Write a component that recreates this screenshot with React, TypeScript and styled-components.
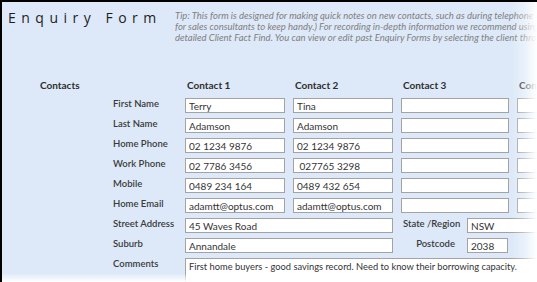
import * as React from "react";
import styled, { createGlobalStyle } from "styled-components";

const GlobalStyle = createGlobalStyle`
  body {
    margin: 0;
    background: #ffffff;
  }
`;

const Frame = styled.div`
  position: relative;
  width: 537px;
  height: 282px;
  box-sizing: border-box;
  overflow: hidden;
  background: #dde9f8;
  border-top: 2px solid #000;
  border-left: 2px solid #000;
  font-family: Lato, "Open Sans", sans-serif;
  color: #333;
`;

const Header = styled.div`
  display: flex;
  align-items: flex-start;
  padding: 7px 0 0 6px;
  height: 69px;
  box-sizing: border-box;
`;

const Title = styled.div`
  width: 167px;
  flex: none;
  font-family: "Open Sans", sans-serif;
  font-size: 14px;
  line-height: 18px;
  letter-spacing: 5.5px;
  color: #1e1e1e;
  white-space: nowrap;
`;

const Tip = styled.div`
  flex: 1;
  min-width: 0;
  overflow: hidden;
  padding-top: 1px;
  font-size: 9.5px;
  font-style: italic;
  line-height: 11px;
  color: #808080;
`;

const TipLine = styled.div`
  white-space: nowrap;
`;

const FormGrid = styled.div`
  display: grid;
  grid-template-columns: 65px 64px 100px 100px 108px 100px;
  grid-auto-rows: 15px;
  column-gap: 8px;
  row-gap: 5px;
  padding: 7px 0 0 38px;
  width: max-content;
`;

const SectionLabel = styled.div`
  grid-column: 1;
  font-size: 10px;
  font-weight: 700;
  line-height: 15px;
  color: #2e2e2e;
`;

const ColHead = styled.div`
  font-size: 10px;
  font-weight: 700;
  line-height: 15px;
  padding-left: 2px;
  color: #2e2e2e;
  white-space: nowrap;
`;

const FieldLabel = styled.div<{ $right?: boolean }>`
  font-size: 9.5px;
  font-weight: 600;
  line-height: 12px;
  color: #3a3a3a;
  white-space: nowrap;
  text-align: ${(p) => (p.$right ? "right" : "left")};
`;

const RowLabel = styled(FieldLabel)`
  grid-column: 2;
`;

const Field = styled.input<{ $span?: number; $width?: number }>`
  grid-column: ${(p) => (p.$span ? `span ${p.$span}` : "auto")};
  width: ${(p) => (p.$width ? `${p.$width}px` : "100%")};
  height: 15px;
  box-sizing: border-box;
  margin: 0;
  padding: 0 3px;
  border: 1px solid #a3a3a3;
  background: #fff;
  font-family: Lato, "Open Sans", sans-serif;
  font-size: 10px;
  color: #333;
  outline: none;
`;

const Comments = styled.textarea`
  grid-column: span 4;
  height: 40px;
  box-sizing: border-box;
  margin: 0;
  padding: 1px 3px;
  border: 1px solid #a3a3a3;
  background: #fff;
  resize: none;
  font-family: Lato, "Open Sans", sans-serif;
  font-size: 9.3px;
  line-height: 13px;
  color: #333;
`;

const CompoundCell = styled.div`
  grid-column: span 2;
  display: grid;
  grid-template-columns: 52px auto;
  justify-content: start;
  column-gap: 12px;
  padding-left: 2px;
`;

const FadeRight = styled.div`
  position: absolute;
  top: -2px;
  right: 0;
  width: 26px;
  height: calc(100% + 2px);
  background: linear-gradient(
    to right,
    rgba(255, 255, 255, 0) 0%,
    rgba(255, 255, 255, 0.35) 50%,
    #ffffff 100%
  );
  pointer-events: none;
`;

const FadeBottom = styled.div`
  position: absolute;
  left: -2px;
  bottom: 0;
  width: calc(100% + 2px);
  height: 9px;
  background: linear-gradient(to bottom, rgba(255, 255, 255, 0), #ffffff);
  pointer-events: none;
`;

type Contact = {
  first: string;
  last: string;
  home: string;
  work: string;
  mobile: string;
  email: string;
};

const contacts: Contact[] = [
  { first: "Terry", last: "Adamson", home: "02 1234 9876", work: "02 7786 3456", mobile: "0489 234 164", email: "adamtt@optus.com" },
  { first: "Tina", last: "Adamson", home: "02 1234 9876", work: " 027765 3298", mobile: "0489 432 654", email: "adamtt@optus.com" },
  { first: "", last: "", home: "", work: "", mobile: "", email: "" },
  { first: "", last: "", home: "", work: "", mobile: "", email: "" },
];

const rows: { label: string; key: keyof Contact }[] = [
  { label: "First Name", key: "first" },
  { label: "Last Name", key: "last" },
  { label: "Home Phone", key: "home" },
  { label: "Work Phone", key: "work" },
  { label: "Mobile", key: "mobile" },
  { label: "Home Email", key: "email" },
];

export default function App() {
  return (
    <Frame>
      <GlobalStyle />
      <Header>
        <Title>Enquiry Form</Title>
        <Tip>
          <TipLine>Tip: This form is designed for making quick notes on new contacts, such as during telephone calls (or print</TipLine>
          <TipLine>for sales consultants to keep handy.) For recording in-depth information we recommend using the</TipLine>
          <TipLine>detailed Client Fact Find. You can view or edit past Enquiry Forms by selecting the client through</TipLine>
        </Tip>
      </Header>
      <FormGrid>
        <SectionLabel>Contacts</SectionLabel>
        <div />
        {contacts.map((_, i) => (
          <ColHead key={i}>Contact {i + 1}</ColHead>
        ))}
        {rows.map((r) => (
          <React.Fragment key={r.key}>
            <RowLabel>{r.label}</RowLabel>
            {contacts.map((c, i) => (
              <Field key={i} readOnly value={c[r.key]} />
            ))}
          </React.Fragment>
        ))}
        <RowLabel>Street Address</RowLabel>
        <Field $span={2} readOnly value="45 Waves Road" />
        <CompoundCell>
          <FieldLabel>State /Region</FieldLabel>
          <Field $width={150} readOnly value="NSW" />
        </CompoundCell>
        <RowLabel>Suburb</RowLabel>
        <Field $span={2} readOnly value="Annandale" />
        <CompoundCell>
          <FieldLabel $right>Postcode</FieldLabel>
          <Field $width={41} readOnly value="2038" />
        </CompoundCell>
        <RowLabel>Comments</RowLabel>
        <Comments
          readOnly
          value="First home buyers - good savings record. Need to know their borrowing capacity."
        />
      </FormGrid>
      <FadeRight />
      <FadeBottom />
    </Frame>
  );
}
